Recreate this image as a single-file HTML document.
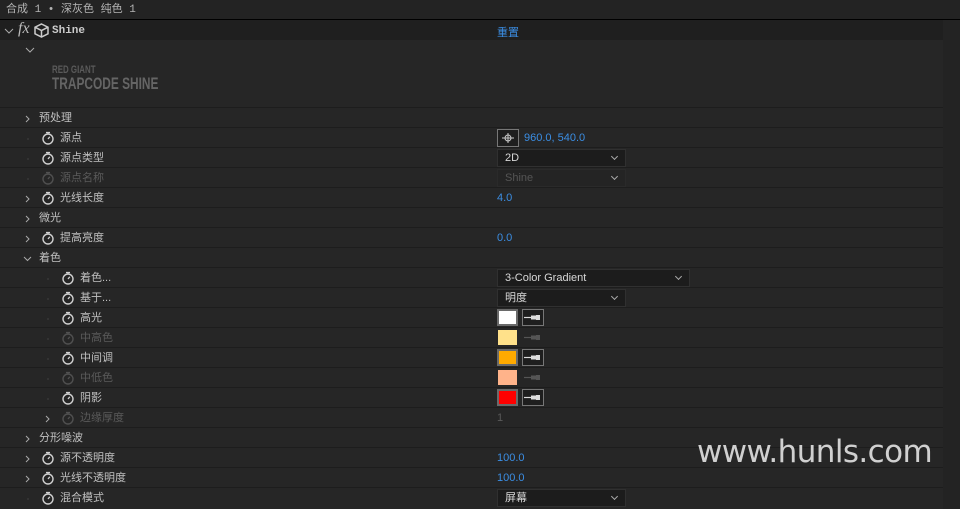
<!DOCTYPE html>
<html><head><meta charset="utf-8"><style>
*{margin:0;padding:0;box-sizing:border-box}
body{width:960px;height:509px;background:#232323;position:relative;overflow:hidden;font-family:"Liberation Sans","Noto Sans CJK SC",sans-serif;font-size:11px;color:#c0c0c0}
.a{position:absolute}
.title{left:0;top:0;width:960px;height:19px;background:#232323;color:#b4b4b4;font-family:"Liberation Mono","Noto Sans CJK SC",monospace;font-size:11px;line-height:20px;padding-left:6px}
.bl{left:0;top:19px;width:960px;height:1px;background:#000}
.main{left:0;top:20px;width:943px;height:489px;background:#262626}
.shine{left:0;top:20px;width:943px;height:20px;background:#1f1f1f}
.row{position:absolute;left:0;width:943px;height:20px;border-top:1px solid #1d1d1d;line-height:21px}
.row span{position:absolute;top:0}
.dim{color:#5a5a5a}
.blue{color:#3b8ee4}
.sw{position:absolute;top:3px;width:14px;height:14px}
.dd{position:absolute;top:1px;height:18px;background:#1c1c1c;border:1px solid #303030;color:#d8d8d8;padding-left:7px;line-height:17px;font-size:11px}
.dd:after{content:"";position:absolute;right:8px;top:4px;width:4px;height:4px;border-right:1px solid #aaa;border-bottom:1px solid #aaa;transform:rotate(45deg)}
.sq{position:absolute;top:1px;width:21px;height:17px;border:2px solid #6a6a6a}
.sqd{position:absolute;top:2px;width:19px;height:15px}
.ey{position:absolute;top:1px;left:522px;width:22px;height:17px;border:1px solid #777;background:#1e1e1e}
.dot{position:absolute;top:10px;width:2px;height:2px;background:#333}
</style></head><body>
<div class="a title">合成 1 • 深灰色 纯色 1</div>
<div class="a bl"></div>
<div class="a main"></div>
<div class="a shine"></div>
<svg class="a" style="left:4px;top:26px" width="10" height="10"><path d="M1 3 L5 7 L9 3" stroke="#aaa" fill="none"/></svg>
<div class="a" style="left:18px;top:20px;color:#bbb;font-family:'Liberation Serif',serif;font-style:italic;font-size:16px">fx</div>
<svg class="a" style="left:34px;top:23px" width="15" height="15"><path d="M7.5 1 L14 4.2 L14 10.8 L7.5 14 L1 10.8 L1 4.2 Z M1 4.2 L7.5 7.5 L14 4.2 M7.5 7.5 L7.5 14" stroke="#ccc" stroke-width="1.5" fill="none"/></svg>
<div class="a" style="left:52px;top:25px;font-family:'Liberation Mono',monospace;font-weight:bold;font-size:11px;color:#ccc">Shine</div>
<div class="a" style="left:497px;top:24px;color:#3b8ee4;font-size:11px">重置</div>
<svg class="a" style="left:25px;top:45px" width="10" height="10"><path d="M1 3 L5 7 L9 3" stroke="#aaa" fill="none"/></svg>
<div class="a" style="left:52px;top:64px;color:#5a5a5a;font-weight:bold;font-size:11px;transform:scaleX(0.72);transform-origin:left;white-space:nowrap">RED GIANT</div>
<div class="a" style="left:52px;top:74px;color:#656565;font-weight:bold;font-size:17px;transform:scaleX(0.7);transform-origin:left;white-space:nowrap">TRAPCODE SHINE</div>

<div id="rows"></div>
<script>
const sw=(x,d)=>{const c=d?'#505050':'#d0d0d0';return `<svg class="sw" style="left:${x-7}px" viewBox="0 0 14 14"><circle cx="7" cy="8" r="5" stroke="${c}" stroke-width="1.4" fill="none"/><path d="M5 1.5H9M7 1.5V3M7 8L8.8 5.8" stroke="${c}" stroke-width="1.3" fill="none"/></svg>`};
const R=(y,o)=>`<div class="row" style="top:${y}px">${o}</div>`;
const arR=x=>`<svg style="position:absolute;left:${x-3}px;top:7px" width="8" height="8"><path d="M2 1 L5 4 L2 7" stroke="#aaa" fill="none"/></svg>`;
const arD=x=>`<svg style="position:absolute;left:${x-4}px;top:7px" width="9" height="8"><path d="M1 2 L4.5 5.5 L8 2" stroke="#aaa" fill="none"/></svg>`;
const dot=x=>`<div class="dot" style="left:${x}px"></div>`;
const t=(x,s,c)=>`<span class="${c||''}" style="left:${x}px">${s}</span>`;
const eye=d=>`<svg style="position:absolute;left:523px;top:4px" width="20" height="11"><path d="M1 5.5H8" stroke="${d?'#555':'#ddd'}" stroke-width="1.2"/><path d="M8 3.5H13V7.5H8Z M13 3H17V8H13Z" fill="${d?'#555':'#ddd'}"/></svg>`;
let h='';
h+=R(107,arR(27)+t(39,'预处理'));
h+=R(127,dot(27)+sw(48)+t(60,'源点')+`<div style="position:absolute;left:497px;top:1px;width:22px;height:18px;border:1px solid #777;background:#1e1e1e"><svg width="20" height="16"><circle cx="10" cy="8" r="3" stroke="#ccc" fill="none"/><path d="M4 8H16M10 3V13" stroke="#ccc"/></svg></div>`+t(524,'960.0, 540.0','blue'));
h+=R(147,dot(27)+sw(48)+t(60,'源点类型')+`<div class="dd" style="left:497px;width:129px">2D</div>`);
h+=R(167,dot(27)+sw(48,1)+t(60,'源点名称','dim')+`<div class="dd" style="left:497px;width:129px;color:#555;background:#242424;border-color:#2a2a2a">Shine</div>`);
h+=R(187,arR(27)+sw(48)+t(60,'光线长度')+t(497,'4.0','blue'));
h+=R(207,arR(27)+t(39,'微光'));
h+=R(227,arR(27)+sw(48)+t(60,'提高亮度')+t(497,'0.0','blue'));
h+=R(247,arD(27)+t(39,'着色'));
h+=R(267,dot(47)+sw(68)+t(80,'着色...')+`<div class="dd" style="left:497px;width:193px">3-Color Gradient</div>`);
h+=R(287,dot(47)+sw(68)+t(80,'基于...')+`<div class="dd" style="left:497px;width:129px">明度</div>`);
h+=R(307,dot(47)+sw(68)+t(80,'高光')+`<div class="sq" style="left:497px;background:#fff"></div><div class="ey"></div>`+eye());
h+=R(327,dot(47)+sw(68,1)+t(80,'中高色','dim')+`<div class="sqd" style="left:498px;background:#ffe18a"></div>`+eye(1));
h+=R(347,dot(47)+sw(68)+t(80,'中间调')+`<div class="sq" style="left:497px;background:#ffaa00"></div><div class="ey"></div>`+eye());
h+=R(367,dot(47)+sw(68,1)+t(80,'中低色','dim')+`<div class="sqd" style="left:498px;background:#ffb38a"></div>`+eye(1));
h+=R(387,dot(47)+sw(68)+t(80,'阴影')+`<div class="sq" style="left:497px;background:#ff0000"></div><div class="ey"></div>`+eye());
h+=R(407,arR(47)+sw(68,1)+t(80,'边缘厚度','dim')+t(497,'1','dim'));
h+=R(427,arR(27)+t(39,'分形噪波'));
h+=R(447,arR(27)+sw(48)+t(60,'源不透明度')+t(497,'100.0','blue'));
h+=R(467,arR(27)+sw(48)+t(60,'光线不透明度')+t(497,'100.0','blue'));
h+=R(487,dot(27)+sw(48)+t(60,'混合模式')+`<div class="dd" style="left:497px;width:129px">屏幕</div>`);
document.getElementById('rows').innerHTML=h;
</script>
<div class="a" style="left:697px;top:434px;font-size:31px;color:#d0d0d0;font-family:'DejaVu Sans',sans-serif;letter-spacing:-0.6px">www.hunls.com</div>
</body></html>
